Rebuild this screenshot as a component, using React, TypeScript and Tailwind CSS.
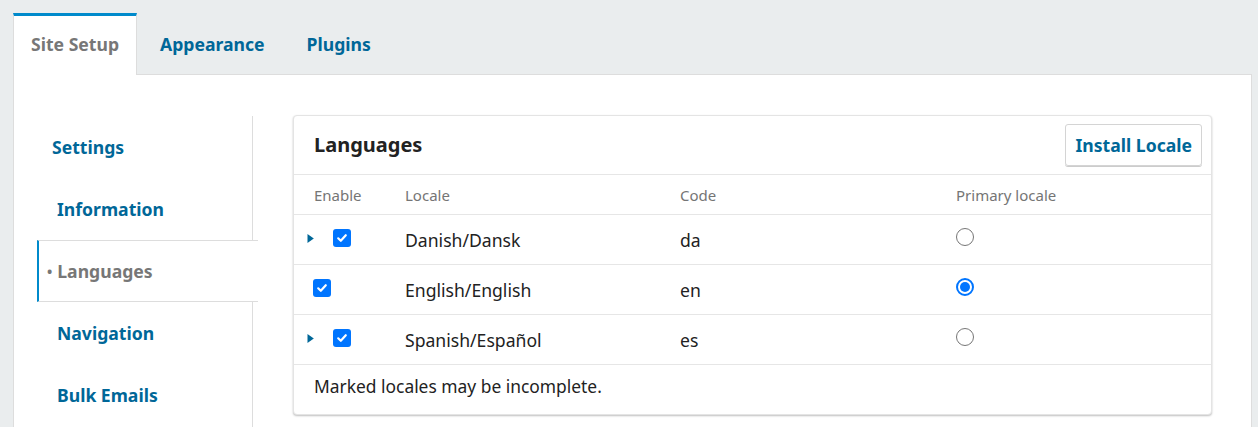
import React from "react";

const font = { fontFamily: '"Noto Sans", "Open Sans", sans-serif' };

function Triangle() {
  return (
    <svg width="7" height="11" viewBox="0 0 7 11" className="block">
      <path d="M0.5 1 L6.8 5.5 L0.5 10 Z" fill="#006798" />
    </svg>
  );
}

function Check() {
  return (
    <span className="inline-flex w-[18px] h-[18px] rounded-[3px] bg-[#0075ff] items-center justify-center">
      <svg width="12" height="12" viewBox="0 0 12 12">
        <path d="M2.2 6.3 L4.8 8.8 L9.8 3.2" stroke="#fff" strokeWidth="2.2" fill="none" strokeLinecap="round" strokeLinejoin="round" />
      </svg>
    </span>
  );
}

function Radio({ on }: { on?: boolean }) {
  return on ? (
    <span className="inline-flex w-[18px] h-[18px] rounded-full border-2 border-[#0075ff] items-center justify-center">
      <span className="w-[10px] h-[10px] rounded-full bg-[#0075ff]" />
    </span>
  ) : (
    <span className="inline-block w-[18px] h-[18px] rounded-full border border-[#767676]" />
  );
}

const rows = [
  { name: "Danish/Dansk", code: "da", expand: true, primary: false },
  { name: "English/English", code: "en", expand: false, primary: true },
  { name: "Spanish/Español", code: "es", expand: true, primary: false },
];

export default function App() {
  return (
    <div style={font} className="w-[1258px] h-[427px] overflow-hidden bg-[#eaedee] pl-[13px] pt-[13px]">
      {/* Tabs */}
      <div className="flex items-stretch h-[62px]">
        <div className="relative z-10 bg-white border-t-[3px] border-[#008acb] border-l border-l-[#ddd] border-r border-r-[#ddd] px-[17px] flex items-center text-[17.6px] font-bold text-[#777] h-[62px] pb-[2px]">
          Site Setup
        </div>
        <div className="ml-[2px] px-[21px] flex items-center text-[17.6px] font-bold text-[#006798] pt-[1px]">Appearance</div>
        <div className="px-[21px] flex items-center text-[17.6px] font-bold text-[#006798] pt-[1px]">Plugins</div>
      </div>

      {/* Panel */}
      <div className="-mt-px w-[1239px] h-[400px] bg-white border border-[#ddd] flex pt-[41px]">
        {/* Sidebar */}
        <div className="w-[239px] shrink-0 border-r border-[#ddd] relative">
          <div className="ml-[23px] -mr-[6px] h-[62px] flex items-center pl-[15px] pt-[1px] text-[17.6px] font-bold text-[#006798]">Settings</div>
          <div className="ml-[23px] -mr-[6px] h-[62px] flex items-center pl-[20px] pt-[1px] text-[17.6px] font-bold text-[#006798]">Information</div>
          <div className="relative ml-[23px] -mr-[6px] h-[62px] flex items-center bg-white border-y border-[#ddd] border-l-2 border-l-[#008acb] pl-[8px] pt-[1px] text-[17.6px] font-bold text-[#777]">
            <span className="text-[14px] mr-[5px] text-[#777]">•</span>Languages
          </div>
          <div className="ml-[23px] -mr-[6px] h-[62px] flex items-center pl-[20px] pt-[1px] text-[17.6px] font-bold text-[#006798]">Navigation</div>
          <div className="ml-[23px] -mr-[6px] h-[62px] flex items-center pl-[20px] pt-[1px] text-[17.6px] font-bold text-[#006798]">Bulk Emails</div>
        </div>

        {/* Card */}
        <div className="ml-[40px] -mt-px w-[919px] h-[300px] bg-white border border-[#e4e4e4] rounded-[4px] shadow-[0_1px_2px_rgba(0,0,0,0.25)] self-start">
          <div className="h-[59px] flex items-center justify-between pl-[20px] pr-[9px] border-b border-[#e6e6e6]">
            <div className="text-[20px] font-bold text-[#222]">Languages</div>
            <div className="h-[42px] px-[9px] flex items-center border border-[#d4d4d4] rounded-[3px] shadow-[0_1px_0_#ccc] text-[17.6px] font-bold text-[#006798]">
              Install Locale
            </div>
          </div>
          <div className="grid grid-cols-[111px_275px_276px_1fr] h-[40px] items-center border-b border-[#e6e6e6] text-[15px] text-[#757575] pt-[1px]">
            <div className="pl-[20px]">Enable</div>
            <div>Locale</div>
            <div>Code</div>
            <div>Primary locale</div>
          </div>
          {rows.map((r) => (
            <div
              key={r.code}
              className="grid grid-cols-[111px_275px_276px_1fr] h-[50px] items-center text-[17.6px] text-[#222] border-b border-[#e6e6e6] pt-[1px]"
            >
              <div className="flex items-center -mt-[6px]">
                {r.expand ? (
                  <>
                    <span className="ml-[13px] w-[7px] mt-[4px]"><Triangle /></span>
                    <span className="ml-[19px]"><Check /></span>
                  </>
                ) : (
                  <span className="ml-[19px]"><Check /></span>
                )}
              </div>
              <div>{r.name}</div>
              <div>{r.code}</div>
              <div className="flex -mt-[6px]">
                <Radio on={r.primary} />
              </div>
            </div>
          ))}
          <div className="h-[49px] flex items-center pl-[20px] pb-[4px] text-[17.4px] text-[#222] -mt-[1px]">
            Marked locales may be incomplete.
          </div>
        </div>
      </div>
    </div>
  );
}
